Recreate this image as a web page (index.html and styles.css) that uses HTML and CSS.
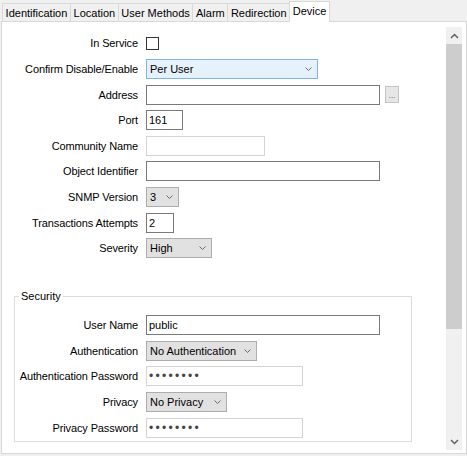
FILE: index.html
```html
<!DOCTYPE html>
<html>
<head>
<meta charset="utf-8">
<link rel="stylesheet" href="styles.css">
</head>
<body>
<div class="tabs">
  <div class="tab">Identification</div>
  <div class="tab">Location</div>
  <div class="tab">User Methods</div>
  <div class="tab">Alarm</div>
  <div class="tab">Redirection</div>
  <div class="tab active">Device</div>
</div>
<div class="panel">
  <div class="content">
    <div class="form main">
      <div class="lbl">In Service</div>
      <div class="ctl"><span class="check"></span></div>

      <div class="lbl">Confirm Disable/Enable</div>
      <div class="dd focus w-confirm"><span>Per User</span><svg class="chev" width="7" height="4" viewBox="0 0 7 4"><polyline points="0.5,0.5 3.5,3.5 6.5,0.5"/></svg></div>

      <div class="lbl">Address</div>
      <div class="ctl address"><span class="field w-long"></span><span class="ellipsis">...</span></div>

      <div class="lbl">Port</div>
      <div class="field w-port">161</div>

      <div class="lbl">Community Name</div>
      <div class="field off w-community"></div>

      <div class="lbl">Object Identifier</div>
      <div class="field w-long"></div>

      <div class="lbl">SNMP Version</div>
      <div class="dd w-snmp"><span>3</span><svg class="chev" width="7" height="4" viewBox="0 0 7 4"><polyline points="0.5,0.5 3.5,3.5 6.5,0.5"/></svg></div>

      <div class="lbl">Transactions Attempts</div>
      <div class="field w-trans">2</div>

      <div class="lbl">Severity</div>
      <div class="dd w-severity"><span>High</span><svg class="chev" width="7" height="4" viewBox="0 0 7 4"><polyline points="0.5,0.5 3.5,3.5 6.5,0.5"/></svg></div>
    </div>

    <fieldset class="group">
      <legend>Security</legend>
      <div class="form inner">
        <div class="lbl">User Name</div>
        <div class="field w-long">public</div>

        <div class="lbl">Authentication</div>
        <div class="dd w-auth"><span>No Authentication</span><svg class="chev" width="7" height="4" viewBox="0 0 7 4"><polyline points="0.5,0.5 3.5,3.5 6.5,0.5"/></svg></div>

        <div class="lbl">Authentication Password</div>
        <div class="field off w-pass"><span class="dots">••••••••</span></div>

        <div class="lbl">Privacy</div>
        <div class="dd w-privacy"><span>No Privacy</span><svg class="chev" width="7" height="4" viewBox="0 0 7 4"><polyline points="0.5,0.5 3.5,3.5 6.5,0.5"/></svg></div>

        <div class="lbl">Privacy Password</div>
        <div class="field off w-pass"><span class="dots">••••••••</span></div>
      </div>
    </fieldset>
  </div>
  <div class="scrollbar">
    <div class="sb-btn"><svg width="9" height="6" viewBox="0 0 9 6"><polyline points="1,5 4.5,1.5 8,5"/></svg></div>
    <div class="sb-track"><div class="sb-thumb"></div></div>
    <div class="sb-btn"><svg width="9" height="6" viewBox="0 0 9 6"><polyline points="1,1 4.5,4.5 8,1"/></svg></div>
  </div>
</div>
</body>
</html>
```
FILE: styles.css
```css
* { box-sizing: border-box; }
html, body { margin: 0; padding: 0; }
body {
  background: #f0f0f0;
  font-family: "Liberation Sans", Arial, sans-serif;
  font-size: 11px;
  color: #000;
  width: 467px;
  height: 456px;
  overflow: hidden;
}

/* tabs */
.tabs {
  display: flex;
  align-items: flex-end;
  height: 21px;
  padding-left: 2px;
}
.tab {
  height: 18px;
  padding: 0 2.6px;
  border: 1px solid #d9d9d9;
  border-bottom: none;
  margin-right: -1px;
  line-height: 18px;
  background: #f0f0f0;
  white-space: nowrap;
}
.tab.active {
  height: 21px;
  margin-bottom: -1px;
  background: #fff;
  line-height: 19px;
  position: relative;
  z-index: 1;
}

/* panel */
.panel {
  margin-left: 1px;
  width: 466px;
  height: 433px;
  border: 1px solid #d9d9d9;
  background: #fff;
  display: flex;
}
.content {
  flex: 1;
  padding-top: 11.4px;
}

.form {
  display: grid;
  grid-template-columns: 136px auto;
  column-gap: 8px;
  row-gap: 5.6px;
  grid-auto-rows: 20px;
  align-items: center;
  justify-items: start;
}
.form.inner {
  grid-template-columns: 123px auto;
  padding-top: 12px;
}
.lbl {
  justify-self: end;
  white-space: nowrap;
  letter-spacing: -0.12px;
}

.ctl { display: flex; align-items: center; }
.address { gap: 5px; }

.check {
  display: block;
  width: 13px;
  height: 13px;
  border: 1px solid #333;
  background: #fff;
}

.field {
  display: block;
  height: 20px;
  border: 1px solid #7a7a7a;
  background: #fff;
  padding: 0 2px;
  line-height: 18px;
  white-space: nowrap;
  overflow: hidden;
}
.field.off { border-color: #d4d4d4; }
.dots {
  font-size: 12px;
  letter-spacing: 2.3px;
  color: #444;
  line-height: 18px;
}

.ellipsis {
  display: block;
  width: 14px;
  height: 17px;
  border: 1px solid #c4c4c4;
  background: #e6e6e6;
  font-size: 8px;
  line-height: 17px;
  text-align: center;
  color: #555;
}

.dd {
  height: 20px;
  border: 1px solid #adadad;
  background: #e1e1e1;
  display: flex;
  align-items: center;
  justify-content: space-between;
  padding: 0 5px 0 3px;
  white-space: nowrap;
}
.dd.focus {
  background: #e5f1fb;
  border-color: #7eb4ea;
}
.chev {
  fill: none;
  stroke: #6a6a6a;
  stroke-width: 1;
  flex: none;
}

.w-confirm { width: 172px; }
.w-long { width: 234px; }
.w-port { width: 37px; }
.w-community { width: 119px; }
.w-snmp { width: 33px; }
.w-trans { width: 28px; }
.w-severity { width: 66px; }
.w-auth { width: 111px; }
.w-pass { width: 157px; }
.w-privacy { width: 81px; }

/* security group */
.group {
  margin: 32px 0 0 12px;
  width: 398px;
  padding: 0 0 3px 0;
  border: 1px solid #dcdcdc;
  min-width: 0;
}
.group legend {
  padding: 0 2px;
  margin-left: 4px;
  line-height: 13px;
}

/* scrollbar */
.scrollbar {
  width: 16px;
  margin: 5px 4px 3px 0;
  display: flex;
  flex-direction: column;
  background: #f0f0f0;
}
.sb-btn {
  height: 17px;
  display: flex;
  align-items: center;
  justify-content: center;
  flex: none;
}
.sb-btn svg {
  fill: none;
  stroke: #606060;
  stroke-width: 1.5;
}
.sb-track { flex: 1; }
.sb-thumb {
  height: 285px;
  background: #cdcdcd;
}
```
